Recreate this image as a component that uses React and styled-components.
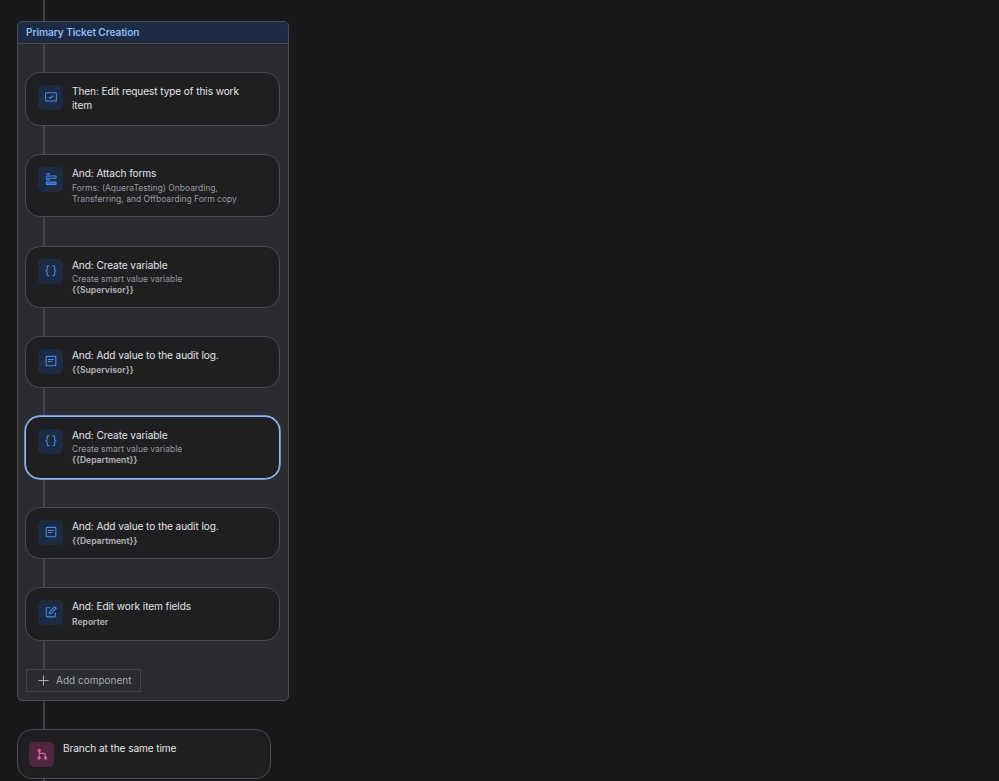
import React from "react";
import styled, { createGlobalStyle } from "styled-components";

const GlobalStyle = createGlobalStyle`
* {
  box-sizing: border-box;
}
body {
  margin: 0;
  background: #18191a;
  color: #e2e3e6;
  font-family: Inter, "Liberation Sans", sans-serif;
  overflow: hidden;
}
`

const CheckIcon = () => (
  <Icon viewBox="0 0 12 12">
    <rect x="0.6" y="1.7" width="10.8" height="8.3" rx="0.8" />
    <path d="M4 6l1.4 1.4L8.2 4.5" />
  </Icon>
)

const FormIcon = () => (
  <Icon viewBox="0 0 12 12">
    <path d="M0.8 0.9h4.2M0.8 6.9h4.2" />
    <rect x="1.3" y="3" width="9.7" height="2.2" rx="0.4" />
    <rect x="1.3" y="9" width="9.7" height="2.5" rx="0.4" fill="#3467b5" />
  </Icon>
)

const BracesIcon = () => (
  <Icon viewBox="0 0 12 12">
    <path d="M4.2 0.9H3.2Q2.1 0.9 2.1 2v2.2Q2.1 5.8 0.8 5.8 2.1 5.8 2.1 7.4v2.1q0 1.1 1.1 1.1H4.2" />
    <path d="M7.6 0.9h1q1.1 0 1.1 1.1v2.2q0 1.6 1.3 1.6-1.3 0-1.3 1.6v2.1q0 1.1-1.1 1.1H7.6" />
  </Icon>
)

const LogIcon = () => (
  <Icon viewBox="0 0 12 12">
    <rect x="1.2" y="1.4" width="9.6" height="9.4" rx="0.8" />
    <path d="M3 4.5h6M3 6.5h4.5" />
  </Icon>
)

const EditIcon = () => (
  <Icon viewBox="0 0 12 12">
    <path d="M5.2 1.7H2Q1.2 1.7 1.2 2.5v7.6q0 0.8 0.8 0.8h7.6q0.8 0 0.8-0.8V6.8" />
    <path d="M4.3 7.8l0.5-2.2L9.3 1.1q0.4-0.4 0.8 0l0.8 0.8q0.4 0.4 0 0.8L6.4 7.2z" />
  </Icon>
)

const BranchIcon = () => (
  <Icon viewBox="0 0 12 12">
    <circle cx="3.2" cy="2.3" r="1.1" fill="currentColor" />
    <circle cx="3.2" cy="10" r="1.1" fill="currentColor" />
    <circle cx="9.4" cy="10" r="1.1" fill="currentColor" />
    <path d="M3.2 2.3v7.7M3.2 5.4h4.2q2 0 2 2V10" />
  </Icon>
)

const steps = [
  { title: "Then: Edit request type of this work item", icon: CheckIcon, height: 54, gap: 28 },
  {
    title: "And: Attach forms",
    text: "Forms: (AqueraTesting) Onboarding, Transferring, and Offboarding Form copy",
    icon: FormIcon,
    height: 63,
    gap: 29,
  },
  {
    title: "And: Create variable",
    text: "Create smart value variable",
    value: "{{Supervisor}}",
    icon: BracesIcon,
    height: 62,
    gap: 28,
  },
  { title: "And: Add value to the audit log.", value: "{{Supervisor}}", icon: LogIcon, height: 52, gap: 28 },
  {
    title: "And: Create variable",
    text: "Create smart value variable",
    value: "{{Department}}",
    icon: BracesIcon,
    height: 63,
    gap: 28,
    selected: true,
  },
  { title: "And: Add value to the audit log.", value: "{{Department}}", icon: LogIcon, height: 52, gap: 28 },
  { title: "And: Edit work item fields", value: "Reporter", icon: EditIcon, height: 54, gap: 28, roomy: true },
]

const Step = ({ step }) => {
  const StepIcon = step.icon
  return (
    <>
      <Card $height={step.height} $selected={step.selected}>
        <IconBox>
          <StepIcon />
        </IconBox>
        <Copy>
          <Title>{step.title}</Title>
          {step.text && <Text $tight={step.value}>{step.text}</Text>}
          {step.value && <Value $gap={step.roomy ? 4 : step.text ? 0 : 3}>{step.value}</Value>}
        </Copy>
      </Card>
      <Connector $height={step.gap} $left={18} />
    </>
  )
}

export default function App() {
  return (
    <Canvas>
      <GlobalStyle />
      <Connector $height={21} $left={26} />
      <Group>
        <GroupHeader>Primary Ticket Creation</GroupHeader>
        <GroupBody>
          <Connector $height={28} $left={18} />
          {steps.map((step, i) => (
            <Step key={i} step={step} />
          ))}
          <AddButton>
            <Plus viewBox="0 0 12 12">
              <path d="M6 0.5v11M0.5 6h11" />
            </Plus>
            <AddLabel>Add component</AddLabel>
          </AddButton>
        </GroupBody>
      </Group>
      <Connector $height={28} $left={26} />
      <Card $height={50} $branch>
        <IconBox $pink>
          <BranchIcon />
        </IconBox>
        <Copy>
          <Title>Branch at the same time</Title>
        </Copy>
      </Card>
      <Connector $height={2} $left={26} />
    </Canvas>
  )
}

const Canvas = styled.main`
display: flex;
flex-direction: column;
height: 781px;
padding-left: 17px;
overflow: hidden;
`

const Connector = styled.div`
flex: none;
width: 2px;
height: ${(p) => p.$height}px;
margin-left: ${(p) => p.$left}px;
background: #424347;
`

const Group = styled.section`
flex: none;
width: 272px;
height: 680px;
border: 1px solid #4a4b4f;
border-radius: 5px;
background: #2b2c2f;
overflow: hidden;
`

const GroupHeader = styled.h2`
height: 22px;
margin: 0;
padding-left: 8px;
border-bottom: 1px solid #4a4b4f;
background: #1c2b42;
color: #8fb8f6;
font-size: 10.1px;
font-weight: 600;
letter-spacing: -0.08px;
line-height: 20px;
`

const GroupBody = styled.div`
padding: 0 7px;
`

const Card = styled.article`
position: relative;
display: flex;
flex: none;
width: ${(p) => (p.$branch ? 254 : 255)}px;
height: ${(p) => p.$height}px;
padding: 11.5px 24px 0 ${(p) => (p.$branch ? 11 : 12)}px;
border: 1px solid #4a4b4f;
border-color: ${(p) => (p.$selected ? "#8fb8f6" : "#4a4b4f")};
border-radius: 15px;
box-shadow: ${(p) => (p.$selected ? "0 0 0 0.7px #8fb8f6" : "none")};
background: #1f1f21;
`

const IconBox = styled.div`
display: flex;
flex: none;
align-items: center;
justify-content: center;
width: 25px;
height: 25px;
border-radius: 5px;
background: ${(p) => (p.$pink ? "#50253f" : "#1c2b42")};
color: ${(p) => (p.$pink ? "#da62ac" : "#4688ec")};
`

const Icon = styled.svg`
width: 12px;
height: 12px;
fill: none;
stroke: currentColor;
stroke-width: 1.1;
stroke-linejoin: round;
`

const Copy = styled.div`
min-width: 0;
margin: -1px 0 0 9px;
`

const Title = styled.div`
color: #e2e3e6;
font-size: 10.1px;
letter-spacing: -0.09px;
line-height: 14px;
`

const Text = styled.div`
margin-top: ${(p) => (p.$tight ? 2 : 3.3)}px;
color: #96999e;
font-size: 8.5px;
line-height: 11.4px;
`

const Value = styled.div`
margin-top: ${(p) => p.$gap}px;
color: #a9abaf;
font-size: 8.5px;
font-weight: 700;
line-height: 11.4px;
`

const AddButton = styled.button`
display: flex;
align-items: center;
gap: 7px;
width: 115px;
height: 23px;
margin-left: 1px;
padding: 0 0 0 11px;
border: 1px solid #424347;
background: transparent;
color: #a9abaf;
font-family: inherit;
font-size: 10px;
white-space: nowrap;
`

const AddLabel = styled.span`
padding-bottom: 2px;
`

const Plus = styled.svg`
width: 11px;
height: 11px;
stroke: currentColor;
stroke-width: 1.1;
`
